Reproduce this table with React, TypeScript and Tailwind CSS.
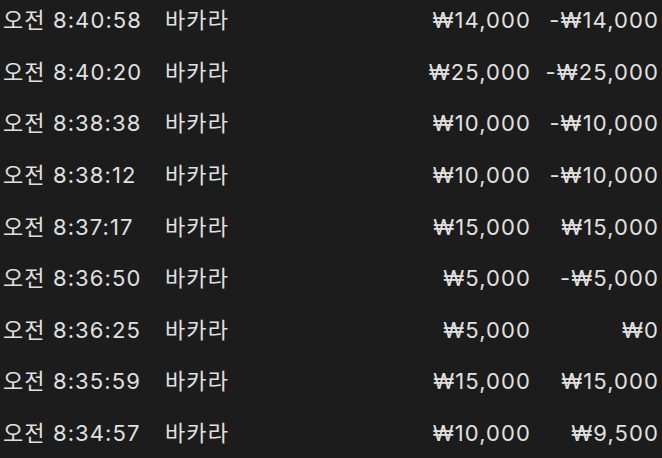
const rows = [
  ["오전 8:40:58", "₩14,000", "-₩14,000"],
  ["오전 8:40:20", "₩25,000", "-₩25,000"],
  ["오전 8:38:38", "₩10,000", "-₩10,000"],
  ["오전 8:38:12", "₩10,000", "-₩10,000"],
  ["오전 8:37:17", "₩15,000", "₩15,000"],
  ["오전 8:36:50", "₩5,000", "-₩5,000"],
  ["오전 8:36:25", "₩5,000", "₩0"],
  ["오전 8:35:59", "₩15,000", "₩15,000"],
  ["오전 8:34:57", "₩10,000", "₩9,500"],
];

export default function App() {
  return (
    <div className="w-[662px] h-[458px] overflow-hidden bg-[#1c1c1c] text-[#e0e0e0] font-['Inter','Noto_Sans_CJK_KR',sans-serif] text-[22px] tracking-[0.05em]">
      <div className="-mt-[5px]">
        {rows.map(([time, bet, result], i) => (
          <div key={i} className="flex items-center h-[51.6px] pl-[3px] pr-[3px]">
            <span className="w-[162px]">{time}</span>
            <span className="w-[120px]">바카라</span>
            <span className="w-[246px] text-right">{bet}</span>
            <span className="flex-1 text-right">{result}</span>
          </div>
        ))}
      </div>
    </div>
  );
}
